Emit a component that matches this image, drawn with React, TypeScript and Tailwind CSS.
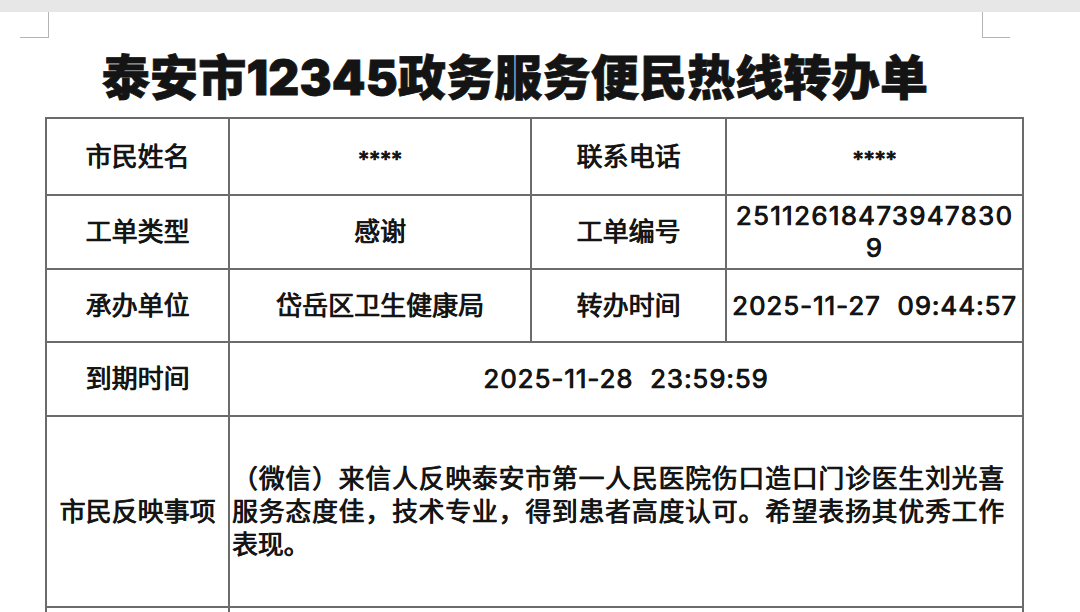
// App.tsx

const font = "font-['Inter','Noto_Sans_CJK_SC',sans-serif]";

type Cell = {
  text: string;
  span?: boolean;
  digits?: boolean;
};

function TableCell({ text, span, digits }: Cell) {
  return (
    <div
      className={`flex items-center justify-center border-r-2 border-b-2 border-[#6b6b6b] text-center whitespace-pre ${
        span ? "col-span-3" : ""
      } ${digits ? "tracking-[1px]" : ""}`}
    >
      {text}
    </div>
  );
}

export default function App() {
  return (
    <div className={`w-[1080px] h-[612px] overflow-hidden bg-white text-[#141414] ${font}`}>
      {/* grey strip above the page */}
      <div className="h-[12px] bg-[#e7e7e7]" />

      {/* page corner marks */}
      <div className="flex h-[26px] justify-between pl-[20px] pr-[70px]">
        <div className="w-[29px] border-r border-b border-[#b4b4b4]" />
        <div className="w-[28px] border-l border-b border-[#b4b4b4]" />
      </div>

      <div className="flex h-[79px] items-center justify-center pr-[50px]">
        <h1 className="text-[48px] leading-none font-black tracking-[0.2px] [-webkit-text-stroke:0.8px_#141414]">
          泰安市12345政务服务便民热线转办单
        </h1>
      </div>

      <div className="ml-[45px] grid w-[979px] grid-cols-[183px_302px_195px_297px] grid-rows-[77px_74px_73px_74px_191px_120px] border-t-2 border-l-2 border-[#6b6b6b] text-[26px] leading-[32px] [-webkit-text-stroke:0.6px_#141414] [text-shadow:0.5px_0_0_#141414]">
        <TableCell text="市民姓名" />
        <div className="flex items-start justify-center border-r-2 border-b-2 border-[#6b6b6b] pt-[24px] text-[22px]">
          ****
        </div>
        <TableCell text="联系电话" />
        <div className="flex items-start justify-center border-r-2 border-b-2 border-[#6b6b6b] pt-[24px] text-[22px]">
          ****
        </div>

        <TableCell text="工单类型" />
        <TableCell text="感谢" />
        <TableCell text="工单编号" />
        <div className="flex flex-col items-center justify-center border-r-2 border-b-2 border-[#6b6b6b] tracking-[1.35px] leading-[32px]">
          <span>25112618473947830</span>
          <span>9</span>
        </div>

        <TableCell text="承办单位" />
        <TableCell text="岱岳区卫生健康局" />
        <TableCell text="转办时间" />
        <TableCell text="2025-11-27  09:44:57" digits />

        <TableCell text="到期时间" />
        <TableCell text="2025-11-28  23:59:59" span digits />

        <TableCell text="市民反映事项" />
        <div className="col-span-3 flex items-center border-r-2 border-b-2 border-[#6b6b6b] pl-[2px] text-[25.8px] leading-[33px]">
          <div className="w-[772px]">
            <div className="whitespace-nowrap text-justify [text-align-last:justify]">
              （微信）来信人反映泰安市第一人民医院伤口造口门诊医生刘光喜
            </div>
            <div className="whitespace-nowrap text-justify [text-align-last:justify]">
              服务态度佳，技术专业，得到患者高度认可。希望表扬其优秀工作
            </div>
            <div className="whitespace-nowrap">表现。</div>
          </div>
        </div>

        <div className="border-r-2 border-b-2 border-[#6b6b6b]" />
        <div className="col-span-3 border-r-2 border-b-2 border-[#6b6b6b]" />
      </div>
    </div>
  );
}
